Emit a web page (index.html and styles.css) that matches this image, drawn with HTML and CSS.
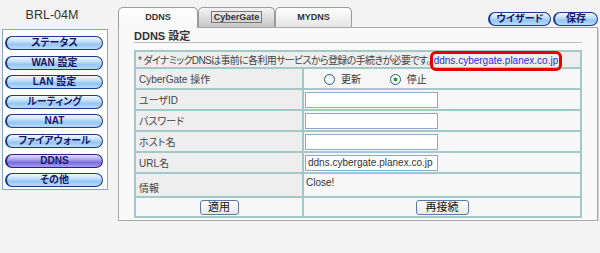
FILE: index.html
```html
<!DOCTYPE html>
<html lang="ja">
<head>
    <meta charset="UTF-8">
    <title>DDNS 設定</title>
    <link rel="stylesheet" href="styles.css">
</head>
<body>
    <div class="page">
        <!-- Left menu -->
        <div class="side">
            <div class="model">BRL-04M</div>
            <div class="menu">
                <a href="#" class="pill">ステータス</a>
                <a href="#" class="pill">WAN 設定</a>
                <a href="#" class="pill">LAN 設定</a>
                <a href="#" class="pill">ルーティング</a>
                <a href="#" class="pill">NAT</a>
                <a href="#" class="pill">ファイアウォール</a>
                <a href="#" class="pill pill-on">DDNS</a>
                <a href="#" class="pill">その他</a>
            </div>
        </div>

        <!-- Main area -->
        <div class="main">
            <div class="topbar">
                <div class="tabs">
                    <a href="#" class="tab tab-on">DDNS</a>
                    <a href="#" class="tab tab-down"><span class="focus">CyberGate</span></a>
                    <a href="#" class="tab">MYDNS</a>
                </div>
                <div class="tools">
                    <a href="#" class="pill tool-wiz">ウイザード</a>
                    <a href="#" class="pill tool-save">保存</a>
                </div>
            </div>

            <div class="panel">
                <h2 class="title">DDNS 設定</h2>
                <table class="form">
                    <tr class="row-note">
                        <td colspan="2" class="note"><span class="note-text">* ダイナミックDNSは事前に各利用サービスから登録の手続きが必要です。</span><a href="#" class="mark">ddns.cybergate.planex.co.jp</a></td>
                    </tr>
                    <tr>
                        <td class="label">CyberGate 操作</td>
                        <td class="value radios">
                            <span class="radio"></span><span class="radio-text">更新</span>
                            <span class="radio radio-on"></span><span class="radio-text">停止</span>
                        </td>
                    </tr>
                    <tr>
                        <td class="label">ユーザID</td>
                        <td class="value"><input type="text" class="boxy"></td>
                    </tr>
                    <tr>
                        <td class="label">パスワード</td>
                        <td class="value"><input type="password" class="boxy"></td>
                    </tr>
                    <tr>
                        <td class="label">ホスト名</td>
                        <td class="value"><input type="text" class="boxy"></td>
                    </tr>
                    <tr>
                        <td class="label">URL名</td>
                        <td class="value"><input type="text" class="boxy" value="ddns.cybergate.planex.co.jp"></td>
                    </tr>
                    <tr class="row-info">
                        <td class="label">情報</td>
                        <td class="value info">Close!</td>
                    </tr>
                    <tr class="row-btn">
                        <td class="center"><button type="button" class="btn btn-apply">適用</button></td>
                        <td class="center"><button type="button" class="btn btn-retry">再接続</button></td>
                    </tr>
                </table>
            </div>
        </div>
    </div>
</body>
</html>
```

FILE: styles.css
```css
* { box-sizing: border-box; }
body { margin: 0; background: #f3f3f3; color: #333; font-family: "Liberation Sans", "Noto Sans CJK JP", sans-serif; font-size: 10px; font-feature-settings: "palt"; }
a { text-decoration: none; }

.page { display: flex; align-items: flex-start; }

/* left menu */
.side { width: 110px; }
.model { height: 29px; padding: 8px 6px 0 0; text-align: center; font-size: 12.5px; line-height: 14px; color: #333; }
.menu { margin-left: 2px; width: 106px; border: 1px solid #86a6d6; background: #fff; padding: 6px 0 2px 2px; display: flex; flex-direction: column; gap: 5.6px; }
.pill { display: block; width: 98px; height: 14px; border: 1px solid #1b3a8a; border-left-width: 2px; border-radius: 7px; background: linear-gradient(#f2f9ff 0%, #c6e2fc 35%, #96c6f2 62%, #b9dcfb 100%); text-align: center; font-weight: bold; font-size: 10px; line-height: 12px; color: #16166c; }
.pill-on { border-color: #2c2080; background: linear-gradient(#e6e2ff 0%, #aaa2f2 38%, #7a6edb 62%, #a69ef2 100%); }

/* main */
.main { margin-left: 8px; width: 481px; padding-top: 7px; }
.topbar { display: flex; align-items: flex-end; justify-content: space-between; height: 20px; }
.tabs { display: flex; align-items: flex-end; }
.tab { display: block; height: 20px; border: 1px solid #9a9a9a; border-bottom: none; border-radius: 5px 5px 0 0; background: linear-gradient(#ffffff, #e4e4e4); text-align: center; font-weight: bold; font-size: 9px; line-height: 19px; color: #333; width: 77px; }
.tab-on { width: 80px; height: 21px; margin-bottom: -1px; position: relative; z-index: 1; background: linear-gradient(#ffffff, #f9f9f9 70%); }
.tab-down { background: linear-gradient(#f4f4f4, #c6c6c6); }
.tab-down .focus { border: 1px solid #777; padding: 0 2px; }
.tools { display: flex; gap: 2px; padding: 0 1px 1px 0; }
.tool-wiz { width: 63px; }
.tool-save { width: 45px; }

.panel { width: 480px; height: 194px; border: 1px solid #a9a9a9; background: #f9f9f9; padding: 0 15px; box-shadow: 1px 1px 0 #d9d9d9; }
.title { margin: 0; height: 15px; padding-top: 2px; font-size: 11px; font-weight: bold; line-height: 12px; color: #333; border-bottom: 1px solid #bdbdbd; }

/* settings table */
.form { margin-top: 7px; width: 448px; border-collapse: collapse; border: 2px solid #a2c8c8; }
.form td { border: 2px solid #a2c8c8; padding: 0 3px; height: 21px; white-space: nowrap; }
.label { width: 168px; background: #eeeeee; color: #444; }
.value { background: #f7f7f7; padding-left: 1px !important; }
.note { background: #eeeeee; color: #444; height: 17px !important; padding: 0 2px !important; }
.note-text { letter-spacing: -0.65px; }
.row-info td { height: 24px; vertical-align: top; padding-top: 6px; }
.row-info .info { padding-top: 3px; padding-left: 2px !important; }
.row-btn td { height: 20px; background: #f7f7f7; }
.center { text-align: center; }

.mark { position: relative; color: #2a2ae6; font-size: 10px; margin-left: 3px; }
.mark::after { content: ""; position: absolute; left: -4px; right: -4px; top: -4px; bottom: -5px; border: 3px solid #e30000; border-radius: 6px; }

.radios { padding-left: 20px !important; }
.radio { display: inline-block; width: 11px; height: 11px; border: 1px solid #2a5a8c; border-radius: 50%; background: radial-gradient(#ffffff 40%, #dde6ee); vertical-align: -2px; }
.radio-on { background: radial-gradient(#1ea51e 28%, #ffffff 34%, #ffffff 50%, #dde6ee); margin-left: 26px; }
.radio-text { margin-left: 6px; color: #333; }

.boxy { width: 133px; height: 16px; border: 1px solid #8fa8c8; background: #fff; padding: 0 2px; font: 10px "Liberation Sans", sans-serif; color: #333; display: block; }

.btn { height: 15px; border: 1px solid #5c78a8; border-radius: 3px; background: linear-gradient(#ffffff, #ece9e4); font: 11px "Liberation Sans", "Noto Sans CJK JP", sans-serif; color: #111; padding: 0; line-height: 12px; }
.btn-apply { width: 39px; }
.btn-retry { width: 53px; }
```
